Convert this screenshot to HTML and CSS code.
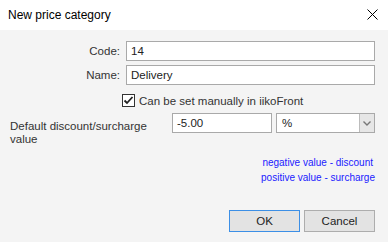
FILE: index.html
```html
<!DOCTYPE html>
<html>
<head>
<meta charset="utf-8">
<link rel="stylesheet" href="styles.css">
</head>
<body>
<div class="dialog">
  <div class="titlebar">
    <span class="title">New price category</span>
    <svg class="close" width="12" height="12" viewBox="0 0 12 12"><path d="M0.5 0.5 L10.5 10.5 M10.5 0.5 L0.5 10.5" stroke="#000" stroke-width="1" fill="none"/></svg>
  </div>
  <div class="content">
    <div class="field-row first">
      <label class="label">Code:</label>
      <div class="input">14</div>
    </div>
    <div class="field-row">
      <label class="label">Name:</label>
      <div class="input">Delivery</div>
    </div>
    <div class="check-row">
      <svg class="checkbox" width="13" height="13" viewBox="0 0 13 13">
        <rect x="0.5" y="0.5" width="12" height="12" fill="#fff" stroke="#333"/>
        <path d="M2.5 6.5 L5 9 L10.5 3" stroke="#222" stroke-width="1.8" fill="none"/>
      </svg>
      <span>Can be set manually in iikoFront</span>
    </div>
    <div class="discount-row">
      <div class="dlabel">Default discount/surcharge value</div>
      <div class="input value">-5.00</div>
      <div class="select">
        <span class="select-text">%</span>
        <span class="select-btn">
          <svg width="8" height="5" viewBox="0 0 8 5"><path d="M0.5 0.5 L4 4 L7.5 0.5" stroke="#777" stroke-width="1.4" fill="none"/></svg>
        </span>
      </div>
    </div>
    <div class="hints">
      <div>negative value - discount</div>
      <div>positive value - surcharge</div>
    </div>
    <div class="buttons">
      <button class="btn default">OK</button>
      <button class="btn">Cancel</button>
    </div>
  </div>
</div>
</body>
</html>
```
FILE: styles.css
```css
* { box-sizing: border-box; }
html, body { margin: 0; padding: 0; }
body {
  width: 388px;
  height: 242px;
  overflow: hidden;
  background: #f4f4f4;
  font-family: "Liberation Sans", Arial, sans-serif;
  font-size: 11.5px;
  color: #222;
}
.dialog { width: 388px; height: 242px; display: flex; flex-direction: column; }
.titlebar {
  height: 30px;
  background: #fff;
  display: flex;
  align-items: center;
  justify-content: space-between;
  padding: 0 9px 1px 8px;
}
.title { font-size: 12px; color: #000; }
.close { margin-top: 1px; }
.content {
  flex: 1;
  background: #f4f4f4;
  padding: 0 13px 0 0;
  display: flex;
  flex-direction: column;
}
.field-row {
  display: grid;
  grid-template-columns: 120px 1fr;
  column-gap: 6px;
  align-items: center;
  margin-top: 4px;
}
.field-row.first { margin-top: 11px; }
.label { text-align: right; color: #333; }
.input {
  height: 20px;
  background: #fff;
  border: 1px solid #a9a9a9;
  padding: 0 4px;
  line-height: 18px;
  color: #222;
}
.check-row {
  display: flex;
  align-items: center;
  gap: 4px;
  margin: 9px 0 0 122px;
  height: 13px;
  color: #333;
}
.checkbox { flex: none; }
.discount-row {
  display: flex;
  align-items: flex-start;
  margin-top: 6px;
  padding-left: 10px;
}
.dlabel {
  width: 150px;
  margin-right: 12px;
  margin-top: 7px;
  line-height: 13px;
  color: #333;
}
.value { width: 100px; }
.select {
  margin-left: 4px;
  flex: 1;
  height: 20px;
  background: #fff;
  border: 1px solid #a9a9a9;
  display: flex;
}
.select-text { flex: 1; padding-left: 5px; line-height: 18px; }
.select-btn {
  width: 15px;
  background: #e6e6e6;
  border-left: 1px solid #bcbcbc;
  display: flex;
  align-items: center;
  justify-content: center;
}
.hints {
  margin-top: 9px;
  text-align: right;
  color: #1a1aff;
  font-size: 10px;
  line-height: 15px;
}
.hints div:first-child { padding-right: 2px; }
.buttons {
  display: flex;
  justify-content: flex-end;
  gap: 4px;
  margin-top: 25px;
}
.btn {
  width: 71px;
  height: 22px;
  background: #e3e3e3;
  border: 1px solid #adadad;
  font-family: inherit;
  font-size: 11.5px;
  color: #222;
  padding: 0;
}
.btn.default { border-color: #3c8fe6; }
```
